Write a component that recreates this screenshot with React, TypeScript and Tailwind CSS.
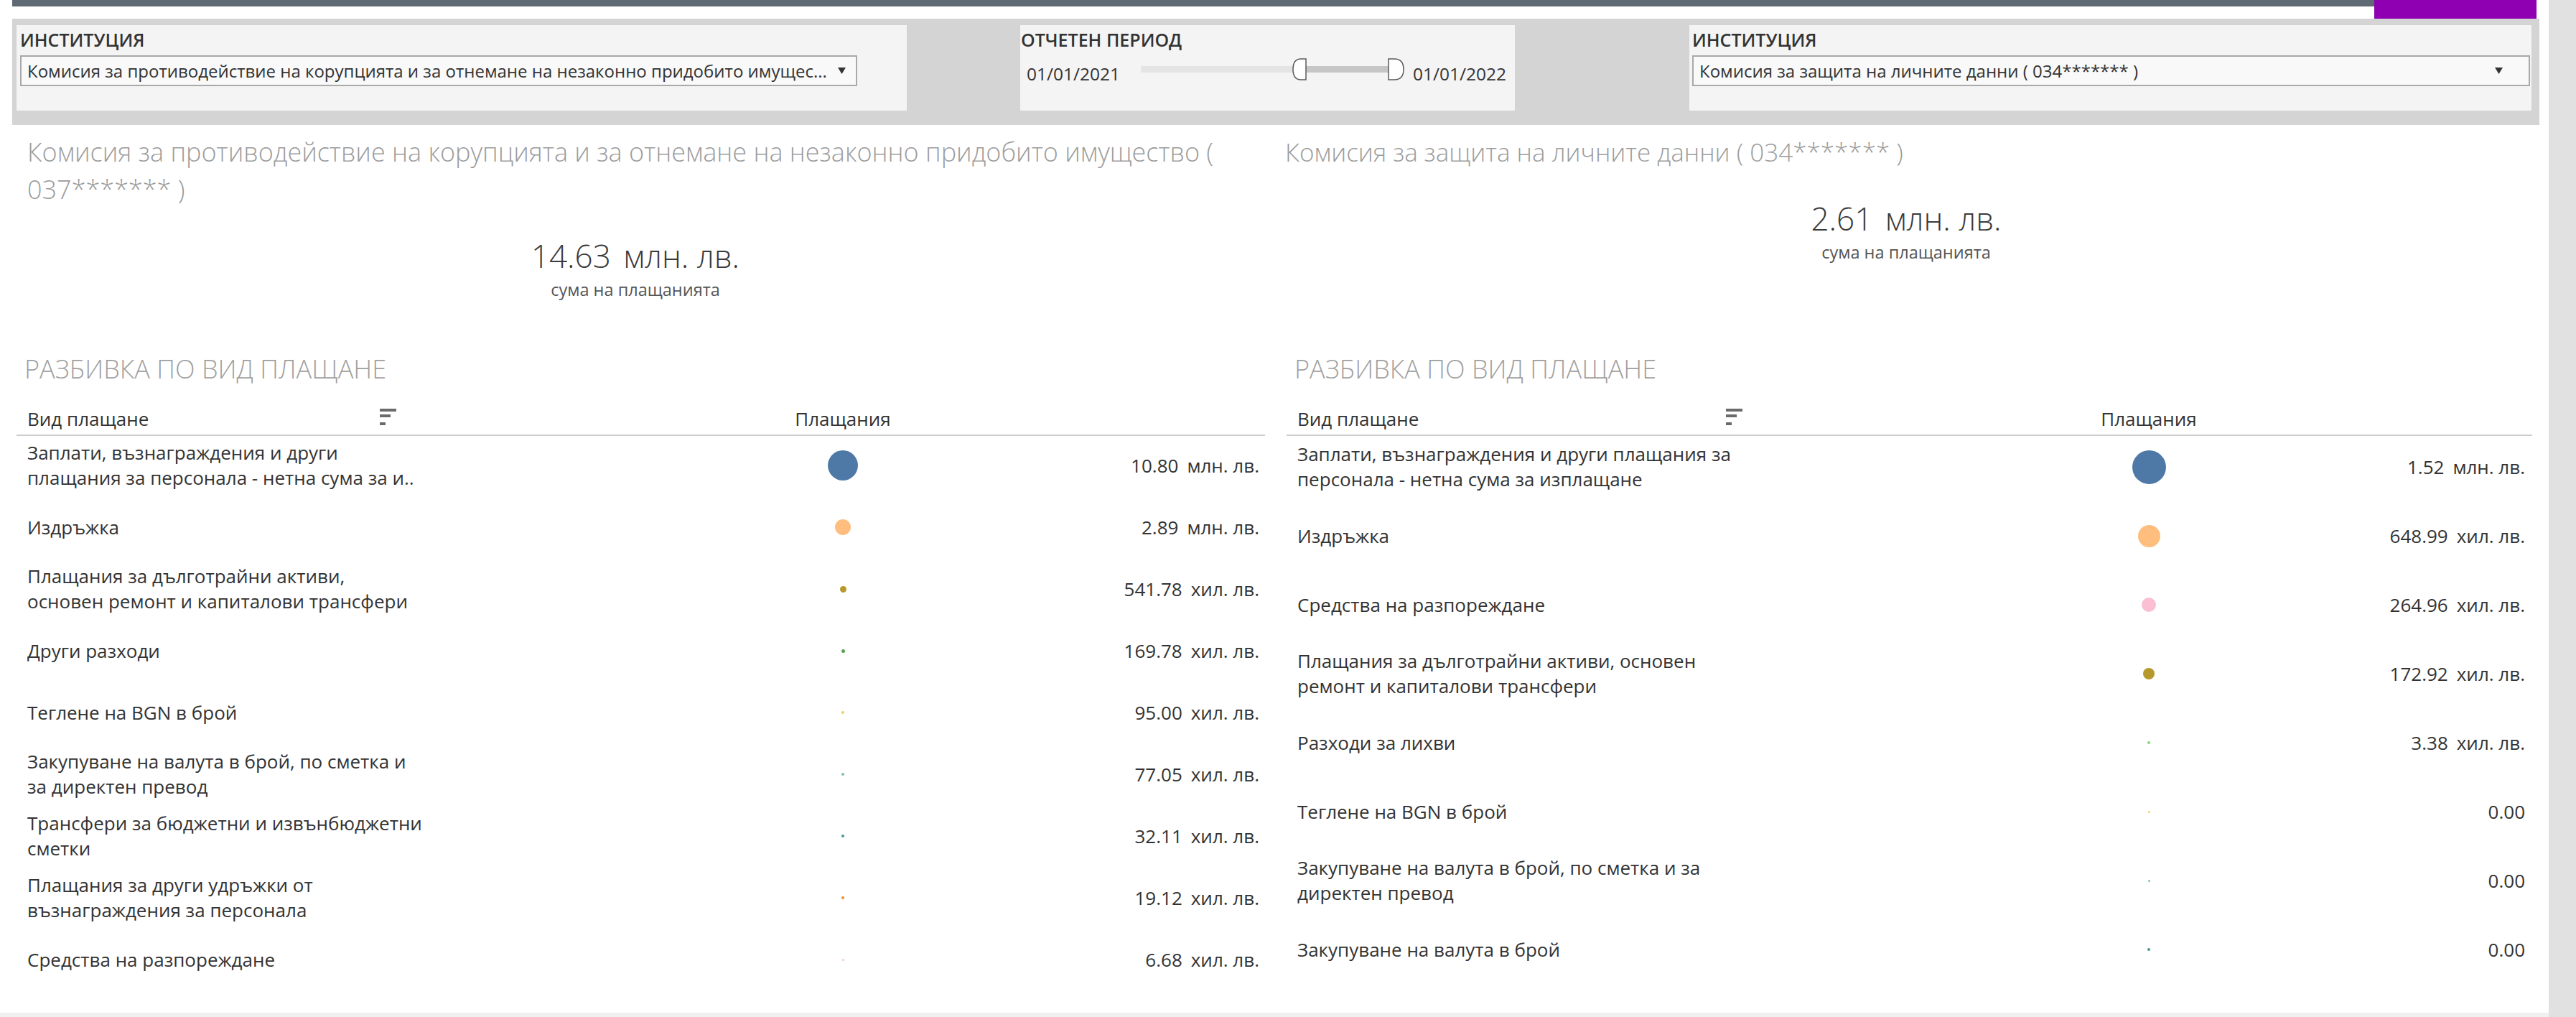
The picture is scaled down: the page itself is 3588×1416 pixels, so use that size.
import React from 'react';

interface PaymentRow {
  lines: string[];
  amount: string;
  unit?: string;
  dot: number;
  color: string;
}

interface PanelLayout {
  titlePad: string;
  titleSize: string;
  headerPad: string;
  tableWrap: string;
  labelCol: string;
  sortGap: string;
  valueCol: string;
  rowHeight: string;
  bodyShift: string;
}

const LEFT_ROWS: PaymentRow[] = [
  { lines: ['Заплати, възнаграждения и други', 'плащания за персонала - нетна сума за и..'], amount: '10.80', unit: 'млн. лв.', dot: 42, color: '#4e79a7' },
  { lines: ['Издръжка'], amount: '2.89', unit: 'млн. лв.', dot: 22, color: '#ffbe7d' },
  { lines: ['Плащания за дълготрайни активи,', 'основен ремонт и капиталови трансфери'], amount: '541.78', unit: 'хил. лв.', dot: 9, color: '#b6992d' },
  { lines: ['Други разходи'], amount: '169.78', unit: 'хил. лв.', dot: 5, color: '#59a14f' },
  { lines: ['Теглене на BGN в брой'], amount: '95.00', unit: 'хил. лв.', dot: 3.5, color: '#f1ce63' },
  { lines: ['Закупуване на валута в брой, по сметка и', 'за директен превод'], amount: '77.05', unit: 'хил. лв.', dot: 3.5, color: '#86bcb6' },
  { lines: ['Трансфери за бюджетни и извънбюджетни', 'сметки'], amount: '32.11', unit: 'хил. лв.', dot: 3.5, color: '#499894' },
  { lines: ['Плащания за други удръжки от', 'възнаграждения за персонала'], amount: '19.12', unit: 'хил. лв.', dot: 3.5, color: '#f28e2b' },
  { lines: ['Средства на разпореждане'], amount: '6.68', unit: 'хил. лв.', dot: 3, color: '#fabfd2' },
];

const RIGHT_ROWS: PaymentRow[] = [
  { lines: ['Заплати, възнаграждения и други плащания за', 'персонала - нетна сума за изплащане'], amount: '1.52', unit: 'млн. лв.', dot: 47, color: '#4e79a7' },
  { lines: ['Издръжка'], amount: '648.99', unit: 'хил. лв.', dot: 31, color: '#ffbe7d' },
  { lines: ['Средства на разпореждане'], amount: '264.96', unit: 'хил. лв.', dot: 20, color: '#fabfd2' },
  { lines: ['Плащания за дълготрайни активи, основен', 'ремонт и капиталови трансфери'], amount: '172.92', unit: 'хил. лв.', dot: 16, color: '#b6992d' },
  { lines: ['Разходи за лихви'], amount: '3.38', unit: 'хил. лв.', dot: 3.5, color: '#8cd17d' },
  { lines: ['Теглене на BGN в брой'], amount: '0.00', dot: 3, color: '#f1ce63' },
  { lines: ['Закупуване на валута в брой, по сметка и за', 'директен превод'], amount: '0.00', dot: 3, color: '#86bcb6' },
  { lines: ['Закупуване на валута в брой'], amount: '0.00', dot: 3.5, color: '#499894' },
];

const LEFT_LAYOUT: PanelLayout = {
  titlePad: 'pl-[38px]',
  titleSize: 'text-[36px]',
  headerPad: 'pl-[34px]',
  tableWrap: 'ml-[23px] w-[1739px]',
  labelCol: 'w-[1051px]',
  sortGap: 'w-[491px]',
  valueCol: 'w-[488px] pr-[8px]',
  rowHeight: 'h-[86px]',
  bodyShift: '-mt-[2px]',
};

const RIGHT_LAYOUT: PanelLayout = {
  titlePad: 'pl-[20px]',
  titleSize: 'text-[35px]',
  headerPad: 'pl-[33px]',
  tableWrap: 'ml-[22px] w-[1735px]',
  labelCol: 'w-[1101px]',
  sortGap: 'w-[597px]',
  valueCol: 'w-[434px] pr-[10px]',
  rowHeight: 'h-[96px]',
  bodyShift: '-mt-[5px]',
};

function DropArrow() {
  return (
    <svg width="11" height="9" viewBox="0 0 11 9">
      <polygon points="0,0 11,0 5.5,9" fill="#333" />
    </svg>
  );
}

function SortIcon() {
  return (
    <svg width="23" height="23" viewBox="0 0 23 23" className="mb-[9px]">
      <rect x="0" y="0" width="23" height="4" fill="#6b6b6b" />
      <rect x="0" y="8" width="15" height="4" fill="#6b6b6b" />
      <rect x="0" y="19" width="8" height="4" fill="#6b6b6b" />
    </svg>
  );
}

function Dropdown({ text, width, arrowPad }: { text: string; width: string; arrowPad: string }) {
  return (
    <div className={`mt-[6px] flex h-[43px] items-center justify-between border-2 border-[#a9a9a9] bg-[#f9f9f9] pl-[8px] ${width} ${arrowPad}`}>
      <span className="text-[24px] leading-none text-[#333]">{text}</span>
      <DropArrow />
    </div>
  );
}

function FilterLabel({ children }: { children: React.ReactNode }) {
  return <div className="text-[25px] font-semibold leading-[32px] text-[#333]">{children}</div>;
}

function DateSlider() {
  return (
    <div className="relative mx-[29px] h-[31px] w-[367px] shrink-0">
      <div className="absolute left-0 top-[11px] h-[9px] w-[214px] bg-[#e4e4e4]" />
      <div className="absolute left-[214px] top-[11px] h-[9px] w-[134px] bg-[#c6c6c6]" />
      <svg className="absolute left-[211px] top-0" width="20" height="31" viewBox="0 0 20 31">
        <path d="M19 1 L12 1 Q1 1 1 15.5 Q1 30 12 30 L19 30 Z" fill="#fff" stroke="#5a5a5a" strokeWidth="1.5" />
      </svg>
      <svg className="absolute left-[344px] top-0" width="23" height="31" viewBox="0 0 23 31">
        <path d="M1 1 L9 1 Q22 1 22 15.5 Q22 30 9 30 L1 30 Z" fill="#fff" stroke="#5a5a5a" strokeWidth="1.5" />
      </svg>
    </div>
  );
}

function FilterBar() {
  return (
    <div className="ml-[17px] flex h-[148px] w-[3520px] bg-[#d4d4d4] pt-[9px]">
      <div className="ml-[6px] h-[119px] w-[1240px] bg-[#f4f4f4] pl-[5px] pt-[4px]">
        <FilterLabel>ИНСТИТУЦИЯ</FilterLabel>
        <Dropdown
          text="Комисия за противодействие на корупцията и за отнемане на незаконно придобито имущес..."
          width="w-[1166px]"
          arrowPad="pr-[14px]"
        />
      </div>
      <div className="ml-[158px] h-[119px] w-[689px] bg-[#f4f4f4] pt-[4px]">
        <div className="pl-[1px]">
          <FilterLabel>ОТЧЕТЕН ПЕРИОД</FilterLabel>
        </div>
        <div className="mt-[10px] flex items-start pl-[9px]">
          <span className="mt-[6px] text-[24.5px] leading-[31px] text-[#333]">01/01/2021</span>
          <DateSlider />
          <span className="-ml-[17px] mt-[6px] text-[24.5px] leading-[31px] text-[#333]">01/01/2022</span>
        </div>
      </div>
      <div className="ml-[243px] h-[119px] w-[1173px] bg-[#f4f4f4] pl-[4px] pt-[4px]">
        <FilterLabel>ИНСТИТУЦИЯ</FilterLabel>
        <Dropdown
          text="Комисия за защита на личните данни ( 034******* )"
          width="w-[1167px]"
          arrowPad="pr-[36px]"
        />
      </div>
    </div>
  );
}

function PaymentsPanel({
  title,
  total,
  rows,
  layout,
  width,
}: {
  title: string[];
  total: string;
  rows: PaymentRow[];
  layout: PanelLayout;
  width: string;
}) {
  return (
    <div className={`flex flex-col ${width}`}>
      {/* Institution title and total */}
      <div className="flex h-[316px] flex-col pt-[12px]">
        <div className={`font-light leading-[52px] text-[#9c9c9c] ${layout.titleSize} ${layout.titlePad}`}>
          {title.map(line => (
            <div key={line}>{line}</div>
          ))}
        </div>
        <div className="mt-[41px] text-center text-[44px] font-light leading-[50px] text-[#3a3a3a]">
          {total} <span className="ml-[6px]">млн. лв.</span>
        </div>
        <div className="mt-[8px] text-center text-[23.5px] leading-[28px] text-[#555]">сума на плащанията</div>
      </div>

      <div className={`text-[36px] font-light leading-[48px] text-[#a0a0a0] ${layout.headerPad}`}>
        РАЗБИВКА ПО ВИД ПЛАЩАНЕ
      </div>

      <div className={layout.tableWrap}>
        {/* Column headers */}
        <div className="flex h-[69px] items-end border-b-2 border-[#cdcdcd] pb-[4px] text-[26px] leading-[35px] text-[#333]">
          <div className={`flex items-end pl-[15px] ${layout.labelCol}`}>
            <span className={layout.sortGap}>Вид плащане</span>
            <SortIcon />
          </div>
          <div className="w-[200px] text-center">Плащания</div>
        </div>

        {/* Rows */}
        <div className={layout.bodyShift}>
          {rows.map(row => (
            <div key={row.lines.join(' ')} className={`flex items-center text-[26px] leading-[35px] text-[#333] ${layout.rowHeight}`}>
              <div className={`pl-[15px] ${layout.labelCol}`}>
                {row.lines.map(line => (
                  <div key={line}>{line}</div>
                ))}
              </div>
              <div className="flex w-[200px] items-center justify-center">
                <div className="rounded-full" style={{ width: row.dot, height: row.dot, backgroundColor: row.color }} />
              </div>
              <div className={`text-right ${layout.valueCol}`}>
                {row.amount}
                {row.unit && <span className="ml-[12px]">{row.unit}</span>}
              </div>
            </div>
          ))}
        </div>
      </div>
    </div>
  );
}

export default function App() {
  return (
    <div className="flex h-[1416px] w-[3588px] overflow-hidden bg-white font-['Open_Sans','Noto_Sans',sans-serif]">
      <div className="flex w-[3550px] flex-col">
        {/* Top strip */}
        <div className="flex h-[26px]">
          <div className="ml-[17px] h-[9px] w-[3290px] bg-[#5f6a75]" />
          <div className="h-[26px] w-[226px] bg-[#8e00b2]" />
        </div>

        <FilterBar />

        <div className="flex flex-1">
          <PaymentsPanel
            title={['Комисия за противодействие на корупцията и за отнемане на незаконно придобито имущество (', '037******* )']}
            total="14.63"
            rows={LEFT_ROWS}
            layout={LEFT_LAYOUT}
            width="w-[1770px]"
          />
          <PaymentsPanel
            title={['Комисия за защита на личните данни ( 034******* )']}
            total="2.61"
            rows={RIGHT_ROWS}
            layout={RIGHT_LAYOUT}
            width="w-[1770px]"
          />
        </div>

        <div className="h-[6px] bg-[#f0f0f0]" />
      </div>
      <div className="w-[38px] bg-[#e1e1e1]" />
    </div>
  );
}
